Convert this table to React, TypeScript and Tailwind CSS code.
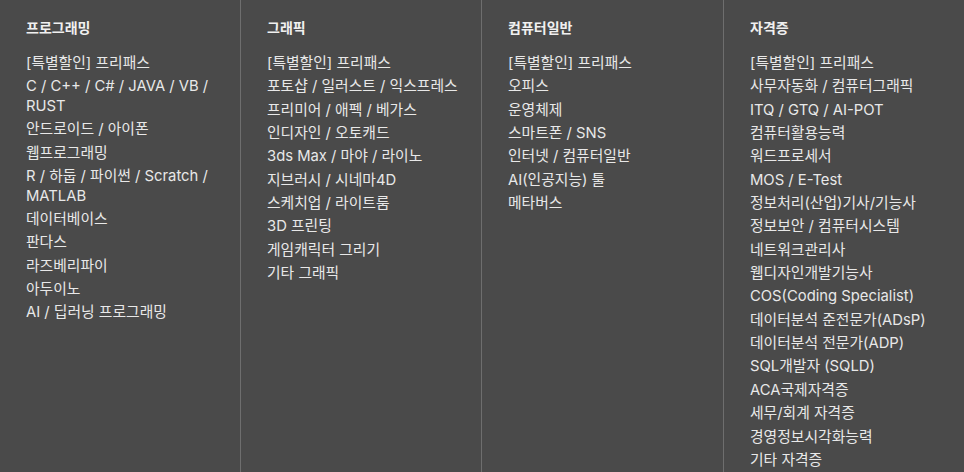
import React from 'react'

const COLUMNS = [
  {
    title: '프로그래밍',
    items: [
      '[특별할인] 프리패스',
      'C / C++ / C# / JAVA / VB / RUST',
      '안드로이드 / 아이폰',
      '웹프로그래밍',
      'R / 하둡 / 파이썬 / Scratch / MATLAB',
      '데이터베이스',
      '판다스',
      '라즈베리파이',
      '아두이노',
      'AI / 딥러닝 프로그래밍',
    ],
  },
  {
    title: '그래픽',
    items: [
      '[특별할인] 프리패스',
      '포토샵 / 일러스트 / 익스프레스',
      '프리미어 / 애펙 / 베가스',
      '인디자인 / 오토캐드',
      '3ds Max / 마야 / 라이노',
      '지브러시 / 시네마4D',
      '스케치업 / 라이트룸',
      '3D 프린팅',
      '게임캐릭터 그리기',
      '기타 그래픽',
    ],
  },
  {
    title: '컴퓨터일반',
    items: [
      '[특별할인] 프리패스',
      '오피스',
      '운영체제',
      '스마트폰 / SNS',
      '인터넷 / 컴퓨터일반',
      'AI(인공지능) 툴',
      '메타버스',
    ],
  },
  {
    title: '자격증',
    items: [
      '[특별할인] 프리패스',
      '사무자동화 / 컴퓨터그래픽',
      'ITQ / GTQ / AI-POT',
      '컴퓨터활용능력',
      '워드프로세서',
      'MOS / E-Test',
      '정보처리(산업)기사/기능사',
      '정보보안 / 컴퓨터시스템',
      '네트워크관리사',
      '웹디자인개발기능사',
      'COS(Coding Specialist)',
      '데이터분석 준전문가(ADsP)',
      '데이터분석 전문가(ADP)',
      'SQL개발자 (SQLD)',
      'ACA국제자격증',
      '세무/회계 자격증',
      '경영정보시각화능력',
      '기타 자격증',
    ],
  },
]

export default function App() {
  return (
    <div
      className="min-h-screen bg-[#4a4a4a] text-[#e8e8e8]"
      style={{ fontFamily: 'Inter, "Noto Sans CJK KR", sans-serif' }}
    >
      <div className="grid grid-cols-[240px_241px_242px_241px] min-h-[472px]">
        {COLUMNS.map((col, i) => (
          <div
            key={i}
            className={`pt-[18px] pl-[26px] pr-[12px] ${i > 0 ? 'border-l border-[#6e6e6e]' : ''}`}
          >
            <h3 className="text-[14px] leading-[20px] font-bold text-[#f0f0f0] mb-[16px]">{col.title}</h3>
            <ul className="flex flex-col gap-[3.75px]">
              {col.items.map((item, j) => (
                <li key={j} className="text-[14.8px] leading-[19.6px]">
                  {item}
                </li>
              ))}
            </ul>
          </div>
        ))}
      </div>
    </div>
  )
}
